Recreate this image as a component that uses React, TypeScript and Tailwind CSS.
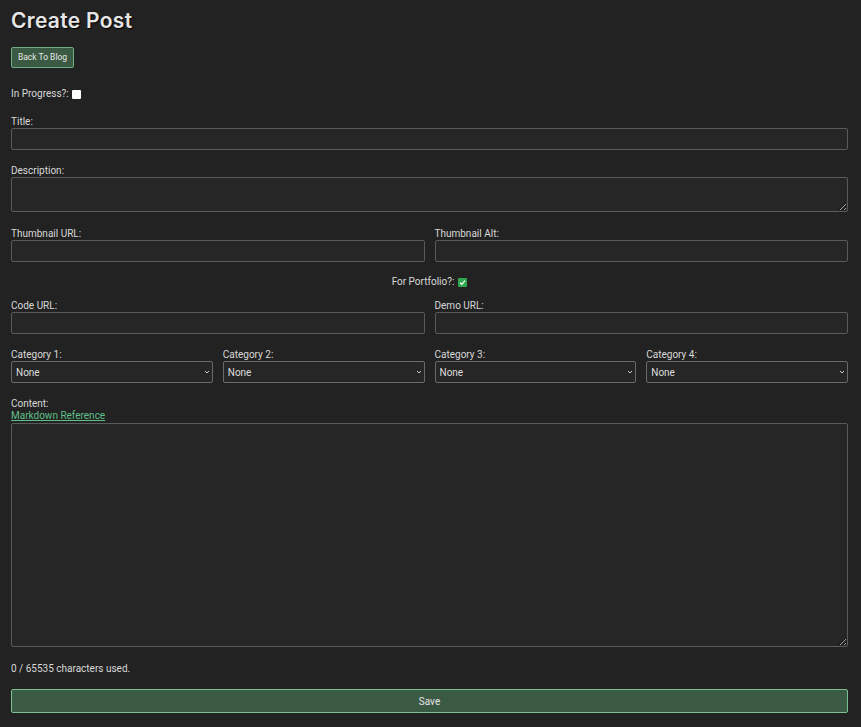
import React from 'react';

const Label = ({ children }: { children: React.ReactNode }) => (
  <label className="block text-[10px] leading-[12px] text-[#d8d8d8]">{children}</label>
);

const inputCls =
  'block w-full h-[22px] bg-[#262626] border border-[#5a5a5a] rounded-[2px] text-[10px] text-[#ddd] px-1 outline-none';

const Select = ({ label }: { label: string }) => (
  <div>
    <Label>{label}</Label>
    <div className="relative">
      <select className="block w-full h-[22px] appearance-none bg-[#262626] border border-[#6a6a6a] rounded-[2px] text-[10px] text-[#ddd] pl-[4px] outline-none">
        <option>None</option>
      </select>
      <svg className="absolute right-[3px] top-[9px] pointer-events-none" width="6" height="5" viewBox="0 0 6 5">
        <path d="M1 1 L3 3 L5 1" stroke="#ccc" strokeWidth="1" fill="none" />
      </svg>
    </div>
  </div>
);

export default function App() {
  return (
    <div
      className="min-h-[727px] bg-[#222222] pl-[11px] pr-[13px] pt-[8px] pb-[14px] text-[#d8d8d8]"
      style={{ fontFamily: 'Roboto, "Liberation Sans", sans-serif' }}
    >
      <h1
        className="text-[21px] leading-[26px] font-semibold tracking-[0.3px] text-[#e6e6e6]"
        style={{ fontFamily: 'Inter, sans-serif', textShadow: '1px 1px 1px #000' }}
      >
        Create Post
      </h1>

      <button className="mt-[13px] h-[21px] w-[63px] rounded-[2px] bg-[#3b5a43] border border-[#6fae84] text-[8.5px] text-[#e6e6e6]">
        Back To Blog
      </button>

      <div className="mt-[20px] flex items-center gap-[3px] text-[10px] leading-[12px]">
        <span>In Progress?:</span>
        <span className="inline-block w-[9px] h-[9px] bg-white rounded-[1px]" />
      </div>

      <div className="mt-[16px]">
        <Label>Title:</Label>
        <input className={inputCls} />
      </div>

      <div className="mt-[15px]">
        <Label>Description:</Label>
        <textarea className="block w-full h-[35px] bg-[#262626] border border-[#5a5a5a] rounded-[2px] resize-y outline-none" />
      </div>

      <div className="mt-[16px] grid grid-cols-2 gap-[10px]">
        <div>
          <Label>Thumbnail URL:</Label>
          <input className={inputCls} />
        </div>
        <div>
          <Label>Thumbnail Alt:</Label>
          <input className={inputCls} />
        </div>
      </div>

      <div className="mt-[14px] flex items-center justify-center gap-[4px] text-[10px] leading-[12px]">
        <span>For Portfolio?:</span>
        <span className="inline-flex items-center justify-center w-[9px] h-[9px] bg-[#2fa84f] rounded-[1px]">
          <svg width="7" height="7" viewBox="0 0 7 7">
            <path d="M1 3.6 L2.8 5.3 L6 1.6" stroke="#fff" strokeWidth="1.2" fill="none" />
          </svg>
        </span>
      </div>

      <div className="mt-[12px] grid grid-cols-2 gap-[10px]">
        <div>
          <Label>Code URL:</Label>
          <input className={inputCls} />
        </div>
        <div>
          <Label>Demo URL:</Label>
          <input className={inputCls} />
        </div>
      </div>

      <div className="mt-[15px] grid grid-cols-4 gap-[10px]">
        <Select label="Category 1:" />
        <Select label="Category 2:" />
        <Select label="Category 3:" />
        <Select label="Category 4:" />
      </div>

      <div className="mt-[15px]">
        <div className="text-[10px] leading-[12px]">Content:</div>
        <a href="#" className="block text-[10px] leading-[12px] text-[#5fbf86] underline mb-[1px]">
          Markdown Reference
        </a>
        <textarea className="block w-full h-[224px] bg-[#262626] border border-[#5a5a5a] rounded-[2px] resize-y outline-none" />
      </div>

      <div className="mt-[16px] text-[10px] leading-[12px]">0 / 65535 characters used.</div>

      <button className="mt-[14px] block w-full h-[24px] rounded-[2px] bg-[#3b5a43] border border-[#7bbf93] text-[10px] text-[#e6e6e6]">
        Save
      </button>
    </div>
  );
}
